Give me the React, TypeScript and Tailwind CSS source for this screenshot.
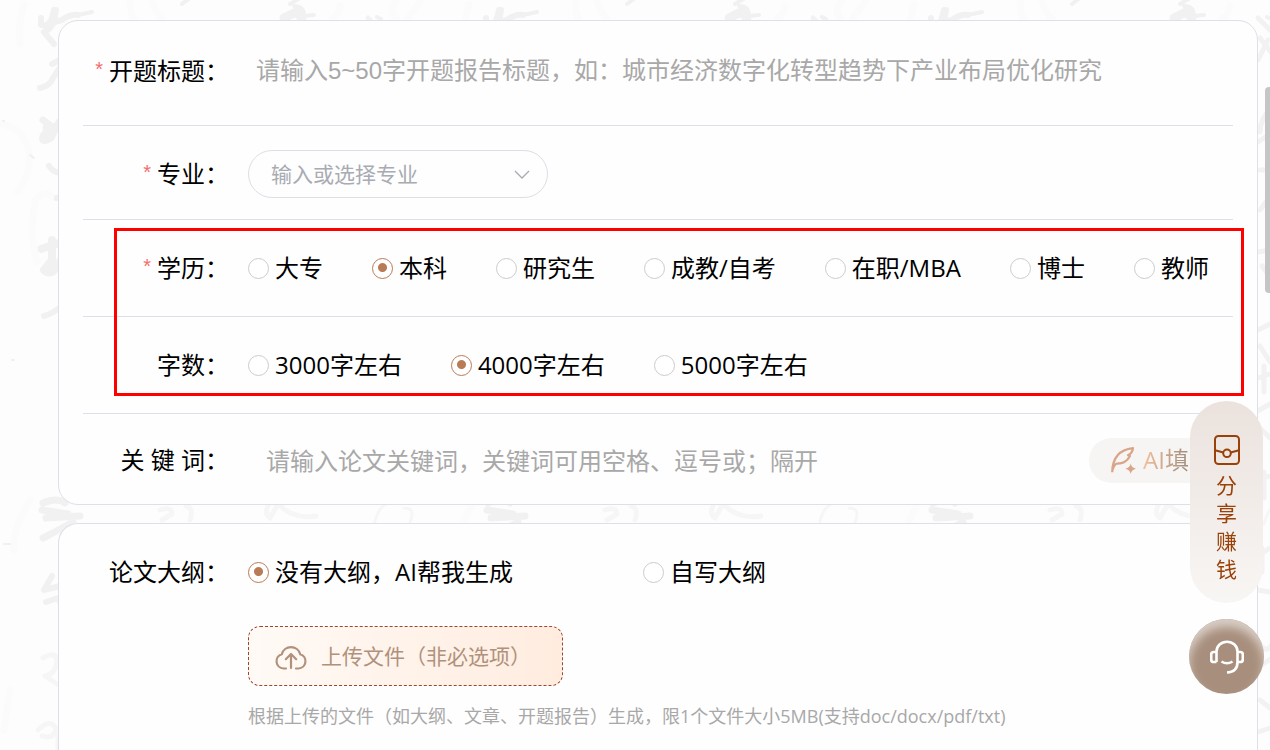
import { useState } from "react";
import type { ReactNode } from "react";

const DEGREES = [
	"大专",
	"本科",
	"研究生",
	"成教/自考",
	"在职/MBA",
	"博士",
	"教师",
];
const WORD_COUNTS = ["3000字左右", "4000字左右", "5000字左右"];
const OUTLINES = ["没有大纲，AI帮我生成", "自写大纲"];

const arial = "font-['Liberation_Sans','Noto_Sans_CJK_SC',sans-serif]";

function InkBackground() {
	return (
		<svg
			aria-hidden="true"
			className="absolute inset-0 -z-10 h-full w-full"
			fill="none"
			strokeLinecap="round"
			strokeLinejoin="round"
		>
			<defs>
				<pattern
					id="ink"
					width="445"
					height="760"
					patternUnits="userSpaceOnUse"
				>
					<g stroke="#f1f1f1" strokeWidth="6">
						<path d="M41 18v7q6 2 10-4l3-11M56 10l-2 12 8-2M54 22q-4 8-10 10l10 12M62 20q8-6 16-5" />
						<path d="M78 15l14-3" strokeWidth="4" />
						<path d="M52 64l8-4 4 4M40 88q10-2 13-10l8-12" />
						<path d="M43 120l8 6-8 10q-2 8 8 2l8-16M46 128q8-2 16-2" strokeWidth="7" />
						<path d="M49 166q6 8 12 6M56 198l8-1" />
						<path d="M41 249l18-6M52 240v20l-8 10q6 6 12-2l6-10" strokeWidth="8" />
						<path d="M44 316q8-2 18-10" />
						<path d="M43 503q14-6 22 0M42 510l26 4M46 518l34-2M43 538q12-6 30-16" strokeWidth="7" />
						<path d="M52 576l-8 14 16-4M46 602l12-4 3 6" />
						<path d="M284 18l12-6 6 6" strokeWidth="9" />
						<path d="M290 4l10-6M294 6q10 0 10 10l10-1M182 4l8-6M377 17l4 2" strokeWidth="4" />
					</g>
					<g stroke="#f6f6f6" strokeWidth="5">
						<path d="M43 658q14-8 14 4-2 12-12 14l12 8" />
						<path d="M38 730q12-12 18-2-2 12-14 8M58 736v14" />
						<path d="M160 510q12-4 12 4l-10 6M186 506q8 2 4 14" />
						<path d="M268 506q-4 8 2 12l8-14q16 16 38 12" />
						<path d="M374 524q4-16 12-20M404 508q12 0 6 14" strokeWidth="3" />
					</g>
					<g stroke="#f2f2f2" strokeWidth="5">
						<path d="M368 18l12 12M378 40l-10 20M370 38l14 18" />
						<path d="M370 132q0-14 12-24M368 142l12-8M370 170h10" />
						<path d="M370 210l12-16M382 198v20M368 252l12-2M372 266l10 14" />
						<path d="M368 330l12-6M370 346l10 16M368 378l12-4M374 366v26" />
						<path d="M366 412l14-8M370 428l10 10M368 480l12-4M374 472v26" />
						<path d="M368 556l12-8M372 548v24" />
						<path d="M368 590l12 2M368 640q8 16 14 4M370 666l12-8" />
						<path d="M370 700l10 8M368 732l12-4" />
					</g>
					<g stroke="#fbfbfb" strokeWidth="7">
						<path d="M2 124q20 4 26 24t-10 44M35 200q10-10 16-4M35 202q-6 30 2 60" />
						<path d="M30 500q-18 30-16 50M24 4q-6 20-4 40M130 2q2 20 4 16M152 2q4 12 10 16" />
						<path d="M340 6q-2 10-8 12M420 2l-12 16M396 2q-8 10 0 16M10 690l-6 40" />
					</g>
					<path
						d="M3 121h1M4 544h6M12 360h2M30 155l4 3"
						stroke="#f0f0f0"
						strokeWidth="2"
					/>
				</pattern>
			</defs>
			<rect width="100%" height="100%" fill="url(#ink)" />
		</svg>
	);
}

function Label({
	htmlFor,
	required,
	children,
}: {
	htmlFor?: string;
	required?: boolean;
	children: ReactNode;
}) {
	return (
		<label
			htmlFor={htmlFor}
			className="flex w-[146px] shrink-0 justify-end whitespace-pre"
		>
			{required && (
				<span className={`mr-1.5 text-xl leading-7 text-[#f56c6c] ${arial}`}>
					*
				</span>
			)}
			{children}
		</label>
	);
}

function RadioGroup({
	name,
	options,
	initial,
	wide,
}: {
	name: string;
	options: string[];
	initial: number;
	wide?: boolean;
}) {
	const [value, setValue] = useState(options[initial]);

	return (
		<div
			role="radiogroup"
			aria-label={name}
			className={wide ? "flex gap-[130px]" : "flex gap-[49px]"}
		>
			{options.map((option) => (
				<label
					key={option}
					className="flex cursor-pointer items-center gap-1.5 whitespace-nowrap"
				>
					<input
						type="radio"
						name={name}
						checked={value === option}
						onChange={() => setValue(option)}
						className="size-[21px] shrink-0 appearance-none rounded-full border border-[#cccccc] bg-white checked:border-[#b97b56] checked:bg-[radial-gradient(circle_at_50%_45%,#b97b56_4px,transparent_5px)]"
					/>
					{option}
				</label>
			))}
		</div>
	);
}

function FeatherIcon() {
	return (
		<svg width="26" height="27" viewBox="0 0 26 27" aria-hidden="true">
			<path
				d="M1.2 25.3C1.4 14 6 3 22 1.2 21.6 4.500 20 7 17 8.200L19 9C16 14.500 11 17 5 16.500M1.500 23C2.500 20 3.500 18 5 16.500"
				fill="none"
				stroke="#d9a487"
				strokeWidth="2.200"
				strokeLinejoin="round"
			/>
			<path
				d="M19.700 16.500q.8 4.400 5.300 5.200-4.500.8-5.300 5.200-.8-4.400-5.300-5.200 4.500-.8 5.300-5.200z"
				fill="#d9a487"
			/>
		</svg>
	);
}

function CloudIcon() {
	return (
		<svg
			width="32"
			height="27"
			viewBox="0 0 32 27"
			fill="none"
			stroke="currentColor"
			strokeWidth="2.200"
			strokeLinecap="round"
			strokeLinejoin="round"
			aria-hidden="true"
		>
			<path d="M11 25.500H8.500A7.300 7.300 0 0 1 6.800 11.200 9.500 9.500 0 0 1 25.200 11.200 7.300 7.300 0 0 1 23.500 25.500H21" />
			<path d="M16 25V11.500M10.800 16.200 16 11l5.200 5.200" />
		</svg>
	);
}

function PacketIcon() {
	return (
		<svg
			width="26"
			height="30"
			viewBox="0 0 26 30"
			fill="none"
			stroke="currentColor"
			strokeWidth="2"
			aria-hidden="true"
		>
			<rect x="1" y="1" width="24" height="28" rx="3.500" />
			<circle cx="13" cy="18.300" r="3.800" />
			<path d="M1 15.300l8.500 2.200M25 15.300l-8.500 2.200" />
		</svg>
	);
}

function HeadsetIcon() {
	return (
		<svg
			width="34"
			height="34"
			viewBox="0 0 34 34"
			fill="none"
			stroke="white"
			strokeWidth="2.600"
			aria-hidden="true"
		>
			<path d="M6.500 22V11.500a10.500 9.800 0 0 1 21 0V22q0 10-10.500 10.500" />
			<path d="M6.500 12H3.700q-2.500 0-2.500 2.500v5q0 2.500 2.500 2.500h2.800M27.500 12h2.800q2.500 0 2.500 2.500v5q0 2.500-2.500 2.500h-2.800" />
			<path d="M11.500 21.500q5.500 3.600 11 0" />
		</svg>
	);
}

function FloatingActions() {
	return (
		<div className="fixed right-1.5 bottom-14 flex flex-col items-center gap-4">
			<button
				type="button"
				className="flex w-[73px] cursor-pointer flex-col items-center gap-1.5 rounded-full bg-linear-to-b from-[#ebe2dd] to-[#f8f6f4] pt-[34px] pb-5 text-[#994108]"
			>
				<PacketIcon />
				<span className="w-[21px] text-[21px] leading-7">分享赚钱</span>
			</button>
			<button
				type="button"
				aria-label="在线客服"
				className="flex size-[75px] cursor-pointer items-center justify-center rounded-full bg-[#a88f7d] shadow-[inset_0_8px_10px_#d8cec6]"
			>
				<HeadsetIcon />
			</button>
		</div>
	);
}

export default function App() {
	return (
		<div className="relative isolate flex h-screen flex-col gap-[18px] overflow-hidden bg-[#fdfdfd] pt-5 pr-3 pl-[58px] font-['Open_Sans','Noto_Sans_CJK_SC',sans-serif] text-2xl text-black">
			<InkBackground />

			<section className="shrink-0 rounded-[20px] border border-[#dedfea] bg-[#fefefe] px-6">
				<div className="flex h-[105px] items-center gap-[19px] border-b border-[#dedfea] pb-1">
					<Label htmlFor="title" required>
						开题标题：
					</Label>
					<input
						id="title"
						placeholder="请输入5~50字开题报告标题，如：城市经济数字化转型趋势下产业布局优化研究"
						className={`h-12 min-w-0 flex-1 px-2 outline-none placeholder:text-[#a8a8a8] ${arial}`}
					/>
				</div>

				<div className="flex h-[94px] items-center gap-[19px] border-b border-[#dedfea] pt-0.5">
					<Label htmlFor="major" required>
						专业：
					</Label>
					<div className="relative">
						<select
							id="major"
							defaultValue=""
							className="block h-12 w-[300px] appearance-none rounded-full border border-[#dcdfe6] bg-transparent px-[22px] text-[21px] text-[#a8abb2] outline-none"
						>
							<option value="">输入或选择专业</option>
							<option value="cs">计算机科学与技术</option>
						</select>
						<svg
							width="16"
							height="10"
							viewBox="0 0 16 10"
							fill="none"
							stroke="#a8abb2"
							strokeWidth="1.300"
							className="pointer-events-none absolute top-5 right-[18px]"
							aria-hidden="true"
						>
							<path d="M1 1l7 7 7-7" />
						</svg>
					</div>
				</div>

				<div className="relative">
					<div className="flex h-[97px] items-center gap-[19px] border-b border-[#dedfea]">
						<Label required>学历：</Label>
						<RadioGroup name="学历" options={DEGREES} initial={1} />
					</div>
					<div className="flex h-[97px] items-center gap-[19px] border-b border-[#dedfea]">
						<Label>字数：</Label>
						<RadioGroup name="字数" options={WORD_COUNTS} initial={1} />
					</div>
					<div className="pointer-events-none absolute top-2 -right-[11px] bottom-[18px] left-[31px] border-3 border-[#ff0000]" />
				</div>

				<div className="flex h-[90px] items-center gap-[19px] pt-0.5">
					<Label htmlFor="keywords">关 键 词：</Label>
					<input
						id="keywords"
						placeholder="请输入论文关键词，关键词可用空格、逗号或；隔开"
						className="h-12 min-w-0 flex-1 px-[18px] outline-none placeholder:text-[#a8a8a8]"
					/>
					<button
						type="button"
						className="flex h-[45px] w-36 cursor-pointer items-center gap-1.5 rounded-full bg-[#f7f5f4] pl-[22px] whitespace-nowrap"
					>
						<FeatherIcon />
						<span className="bg-linear-to-r from-[#f3c09a] to-[#8f8075] to-80% bg-clip-text text-transparent">
							AI填写
						</span>
					</button>
				</div>
			</section>

			<section className="flex-1 rounded-t-[20px] border border-b-0 border-[#dedfea] bg-[#fefefe] px-6 pt-8">
				<div className="flex items-center gap-[19px]">
					<Label>论文大纲：</Label>
					<RadioGroup name="论文大纲" options={OUTLINES} initial={0} wide />
				</div>
				<div className="mt-[38px] pl-[165px]">
					<button
						type="button"
						className="flex h-[60px] w-[315px] cursor-pointer items-center gap-3.5 rounded-xl border border-dashed border-[#9a4632] bg-linear-to-r from-[#fffaf6] to-[#ffecdf] pl-[26px] text-[21px] whitespace-nowrap text-[#b0917c]"
					>
						<CloudIcon />
						上传文件（非必选项）
					</button>
					<p className="mt-4 text-lg text-[#a8a8a8]">
						根据上传的文件（如大纲、文章、开题报告）生成，限1个文件大小5MB(支持doc/docx/pdf/txt)
					</p>
				</div>
			</section>

			<div className="absolute top-[87px] right-0 h-[206px] w-[5px] rounded-l-sm bg-[#c5c5c5]" />
			<FloatingActions />
		</div>
	);
}
